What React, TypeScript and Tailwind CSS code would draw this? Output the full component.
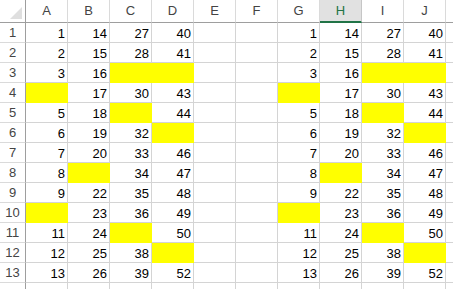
const cols = ["A", "B", "C", "D", "E", "F", "G", "H", "I", "J"];

// null = yellow fill, "" = empty
const block: (number | null)[][] = [
  [1, 14, 27, 40],
  [2, 15, 28, 41],
  [3, 16, null, null],
  [null, 17, 30, 43],
  [5, 18, null, 44],
  [6, 19, 32, null],
  [7, 20, 33, 46],
  [8, null, 34, 47],
  [9, 22, 35, 48],
  [null, 23, 36, 49],
  [11, 24, null, 50],
  [12, 25, 38, null],
  [13, 26, 39, 52],
];

function Cell({ value }: { value: number | null | "" }) {
  if (value === null) {
    return <div className="bg-[#ffff00] border-r border-b border-[#ffff00]" />;
  }
  return (
    <div className="flex items-end justify-end pr-[2px] pb-[1px] border-r border-b border-[#d4d4d4] text-[13px] leading-[15px] text-black">
      {value}
    </div>
  );
}

export default function App() {
  const rows = block.map((r) => [...r, "" as const, "" as const, ...r]);
  return (
    <div
      className="w-[453px] h-[289px] overflow-hidden bg-white"
      style={{ fontFamily: '"Liberation Sans", Arial, sans-serif' }}
    >
      <div className="grid grid-cols-[26px_repeat(10,42px)_1fr] grid-rows-[23px_repeat(14,20px)]">
        {/* corner */}
        <div className="relative border-r border-b border-[#9e9e9e]">
          <div className="absolute right-[3px] bottom-[3px] w-0 h-0 border-l-[12px] border-l-transparent border-b-[12px] border-b-[#dfdfdf]" />
        </div>
        {cols.map((c) =>
          c === "H" ? (
            <div
              key={c}
              className="flex items-center justify-center bg-[#e1e1e1] border-r border-[#c6c6c6] border-b-2 border-b-[#217346] text-[13px] text-[#217346]"
            >
              {c}
            </div>
          ) : (
            <div
              key={c}
              className="flex items-center justify-center border-r border-r-[#dadada] border-b border-b-[#9e9e9e] text-[13px] text-[#444]"
            >
              {c}
            </div>
          )
        )}
        <div className="border-b border-[#9e9e9e]" />

        {rows.map((r, i) => (
          <div key={i} className="contents">
            <div className="flex items-center justify-center border-r border-r-[#9e9e9e] border-b border-b-[#dadada] text-[13px] text-[#444]">
              {i + 1}
            </div>
            {r.map((v, j) => (
              <Cell key={j} value={v} />
            ))}
            <div className="border-b border-[#d4d4d4]" />
          </div>
        ))}

        {/* row 14, mostly cut off */}
        <div className="border-r border-[#9e9e9e]" />
        {cols.map((c) => (
          <div key={c} className="border-r border-[#d4d4d4]" />
        ))}
        <div />
      </div>
    </div>
  );
}
